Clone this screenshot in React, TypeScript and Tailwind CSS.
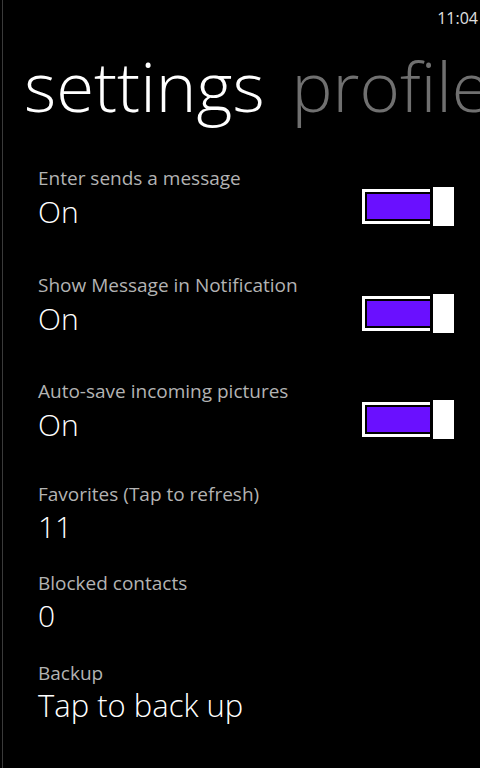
import React from "react";

type Setting = {
  label: string;
  value: string;
  toggle?: boolean;
  big?: boolean;
  rowH: string;
  gap: string;
};

// row heights follow the pitch of the labels in the original screen
const settings: Setting[] = [
  { label: "Enter sends a message", value: "On", toggle: true, rowH: "h-[107px]", gap: "mt-[5px]" },
  { label: "Show Message in Notification", value: "On", toggle: true, rowH: "h-[106px]", gap: "mt-[5px]" },
  { label: "Auto-save incoming pictures", value: "On", toggle: true, rowH: "h-[103px]", gap: "mt-[5px]" },
  { label: "Favorites (Tap to refresh)", value: "11", rowH: "h-[89px]", gap: "mt-[4px]" },
  { label: "Blocked contacts", value: "0", rowH: "h-[90px]", gap: "mt-[4px]" },
  { label: "Backup", value: "Tap to back up", big: true, rowH: "h-[100px]", gap: "mt-[2px]" },
];

function Toggle() {
  return (
    <div className="mt-[21px] flex items-center gap-[3px]">
      <div className="h-[35px] w-[68px] border-[3px] border-r-0 border-white p-[2px] pr-0">
        <div className="h-full w-full bg-[#6a10ff]" />
      </div>
      <div className="h-[39px] w-[21px] bg-white" />
    </div>
  );
}

function Row({ s }: { s: Setting }) {
  return (
    <div className={`flex items-start justify-between pr-[26px] ${s.rowH}`}>
      <div className="flex flex-col">
        <span className="text-[19px] leading-[24px] text-[#b3b3b3]">
          {s.label}
        </span>
        <span
          className={`${s.gap} font-light text-white ${
            s.big ? "text-[31px] leading-[36px]" : "text-[30px] leading-[34px]"
          }`}
        >
          {s.value}
        </span>
      </div>
      {s.toggle && <Toggle />}
    </div>
  );
}

export default function App() {
  return (
    <div
      className="h-[768px] w-[480px] overflow-hidden bg-black pl-[2px]"
      style={{ fontFamily: '"Open Sans", "Liberation Sans", sans-serif' }}
    >
      <div className="h-full border-l border-[#3a3a3a]">
        {/* status bar */}
        <div className="flex h-[36px] items-center justify-end pr-[2px] text-[16px] text-[#e0e0e0]">
          11:04
        </div>

        {/* pivot header */}
        <div className="mt-[7px] flex gap-[27px] whitespace-nowrap pl-[21px] text-[69px] font-light leading-[84px]">
          <span className="text-white">settings</span>
          <span className="text-[#707070]">profile</span>
        </div>

        {/* settings list */}
        <div className="mt-[39px] flex flex-col pl-[35px]">
          {settings.map((s) => (
            <Row key={s.label} s={s} />
          ))}
        </div>
      </div>
    </div>
  );
}
